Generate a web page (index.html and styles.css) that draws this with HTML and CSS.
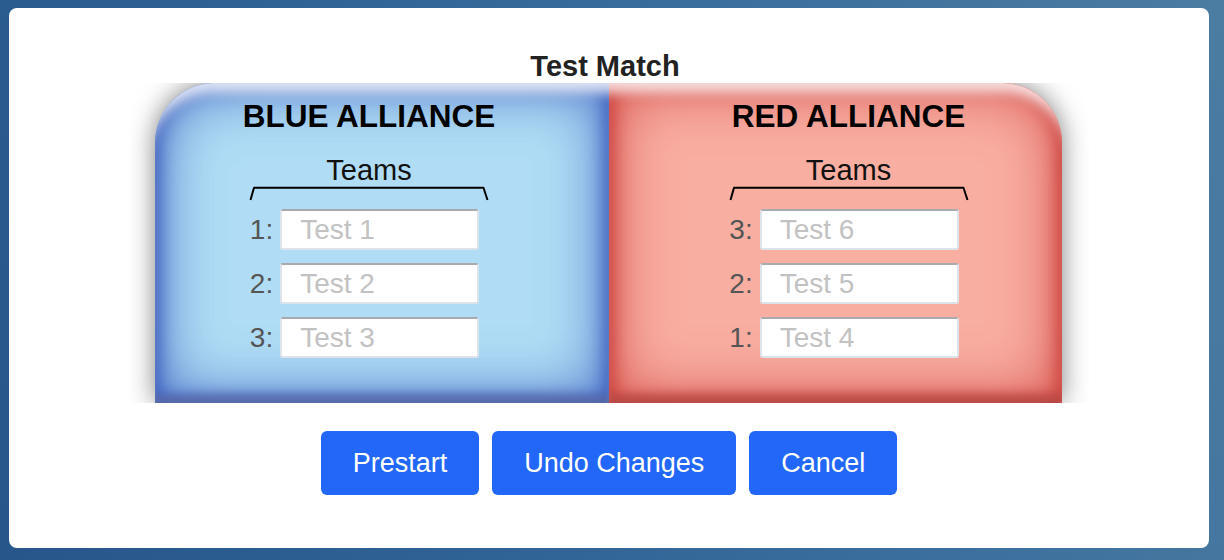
FILE: index.html
```html
<!DOCTYPE html>
<html lang="en">
<head>
<meta charset="utf-8">
<title>Test Match</title>
<link rel="stylesheet" href="styles.css">
</head>
<body>
<div class="modal">
  <h1 class="title">Test Match</h1>
  <div class="field">
    <div class="alliances">
      <section class="alliance blue">
        <h2 class="alliance-name">BLUE ALLIANCE</h2>
        <div class="teams-label">Teams</div>
        <svg class="brace" width="240" height="15" viewBox="0 0 240 15"><path d="M1.5 14 L5 1.8 H234.5 L238.5 14" fill="none" stroke="#000" stroke-width="2" stroke-linejoin="round"/></svg>
        <div class="team-list">
          <div class="team-row"><span class="slot">1:</span><input class="team-input" type="text" placeholder="Test 1"></div>
          <div class="team-row"><span class="slot">2:</span><input class="team-input" type="text" placeholder="Test 2"></div>
          <div class="team-row"><span class="slot">3:</span><input class="team-input" type="text" placeholder="Test 3"></div>
        </div>
      </section>
      <section class="alliance red">
        <h2 class="alliance-name">RED ALLIANCE</h2>
        <div class="teams-label">Teams</div>
        <svg class="brace" width="240" height="15" viewBox="0 0 240 15"><path d="M1.5 14 L5 1.8 H234.5 L238.5 14" fill="none" stroke="#000" stroke-width="2" stroke-linejoin="round"/></svg>
        <div class="team-list">
          <div class="team-row"><span class="slot">3:</span><input class="team-input" type="text" placeholder="Test 6"></div>
          <div class="team-row"><span class="slot">2:</span><input class="team-input" type="text" placeholder="Test 5"></div>
          <div class="team-row"><span class="slot">1:</span><input class="team-input" type="text" placeholder="Test 4"></div>
        </div>
      </section>
    </div>
  </div>
  <div class="actions">
    <button class="btn">Prestart</button>
    <button class="btn">Undo Changes</button>
    <button class="btn">Cancel</button>
  </div>
</div>
</body>
</html>
```
FILE: styles.css
```css
html, body {
  margin: 0;
  height: 100%;
}
body {
  padding: 8px 15px 12px 9px;
  box-sizing: border-box;
  background: linear-gradient(70deg, #27568a 0%, #34699a 50%, #4b7ca2 100%);
  font-family: "Liberation Sans", Arial, sans-serif;
  overflow: hidden;
}
.modal {
  width: 1200px;
  height: 540px;
  box-sizing: border-box;
  background: #fff;
  border-radius: 8px;
  padding-top: 42px;
  display: flex;
  flex-direction: column;
  align-items: center;
}
.title {
  margin: 0 8px 0 0;
  font-size: 29px;
  line-height: 32px;
  font-weight: 700;
  color: #222;
}
.field {
  margin-top: 1px;
  width: 960px;
  height: 320px;
  overflow: hidden;
  padding: 0 27px 0 26px;
  box-sizing: border-box;
}
.alliances {
  display: flex;
  height: 320px;
  border-radius: 60px 60px 0 0;
  box-shadow: 0 0 26px rgba(0, 0, 0, 0.5);
}
.alliance {
  height: 320px;
  box-sizing: border-box;
  padding-top: 15px;
  display: flex;
  flex-direction: column;
  align-items: center;
}
.blue {
  width: 454px;
  padding-right: 26px;
  border-radius: 60px 0 0 0;
  background: #b0ddf5;
  box-shadow:
    inset 0 18px 12px -8px rgba(255, 255, 255, 0.8),
    inset 0 -14px 8px -6px rgba(90, 105, 165, 0.8),
    inset 0 0 60px 6px rgba(58, 92, 190, 0.85),
    inset 0 0 18px 4px #3a5cbb;
}
.red {
  width: 453px;
  padding-left: 26px;
  border-radius: 0 60px 0 0;
  background: #f9aea2;
  box-shadow:
    inset 0 18px 12px -8px rgba(255, 255, 255, 0.8),
    inset 0 -14px 8px -6px rgba(180, 75, 70, 0.8),
    inset 0 0 60px 6px rgba(205, 60, 56, 0.8),
    inset 0 0 18px 4px #c63c38;
}
.alliance-name {
  margin: 0;
  font-size: 31.5px;
  line-height: 36px;
  font-weight: 700;
  color: #000;
}
.teams-label {
  margin-top: 20px;
  font-size: 29px;
  line-height: 32px;
  color: #111;
}
.brace {
  display: block;
}
.team-list {
  margin-top: 8px;
  display: flex;
  flex-direction: column;
  gap: 13px;
}
.team-row {
  display: flex;
  align-items: center;
  justify-content: center;
  gap: 7px;
  padding-right: 9px;
}
.slot {
  font-size: 28px;
  line-height: 32px;
  color: #555;
}
.team-input {
  width: 199px;
  height: 41px;
  box-sizing: border-box;
  margin: 0;
  padding: 0 0 0 18px;
  border: 2px solid #dde3eb;
  border-top-color: #a9aaad;
  border-radius: 3px;
  background: #fff;
  font-family: "Liberation Sans", Arial, sans-serif;
  font-size: 28px;
  color: #333;
  outline: none;
}
.team-input::placeholder {
  color: #c2c2c2;
}
.actions {
  margin-top: 28px;
  display: flex;
  gap: 13px;
}
.btn {
  height: 64px;
  padding: 0 32px;
  border: none;
  border-radius: 6px;
  background: #2267f7;
  color: #fff;
  font-family: "Liberation Sans", Arial, sans-serif;
  font-size: 27px;
  cursor: pointer;
}
```
